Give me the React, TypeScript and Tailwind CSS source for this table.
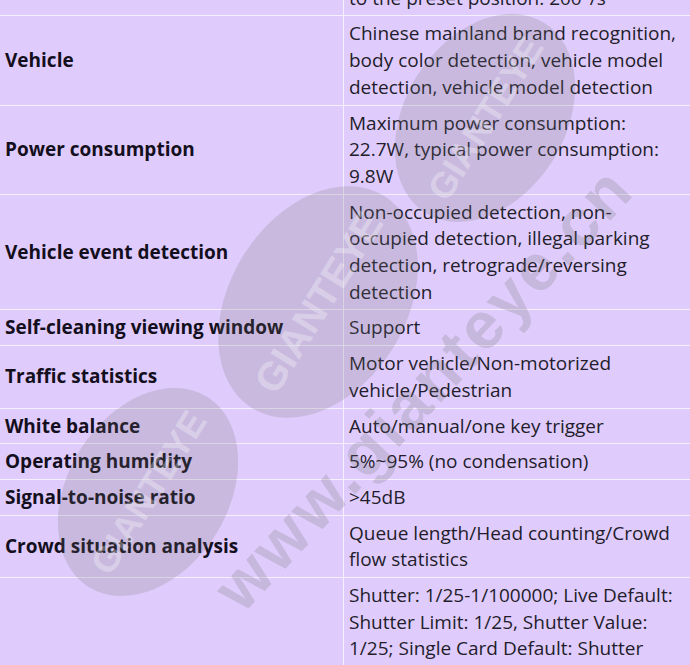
import React from "react";

type Row = { label: string; value: string };

const rows: Row[] = [
  { label: "Vehicle", value: "Chinese mainland brand recognition, body color detection, vehicle model detection, vehicle model detection" },
  { label: "Power consumption", value: "Maximum power consumption: 22.7W, typical power consumption: 9.8W" },
  { label: "Vehicle event detection", value: "Non-occupied detection, non-occupied detection, illegal parking detection, retrograde/reversing detection" },
  { label: "Self-cleaning viewing window", value: "Support" },
  { label: "Traffic statistics", value: "Motor vehicle/Non-motorized vehicle/Pedestrian" },
  { label: "White balance", value: "Auto/manual/one key trigger" },
  { label: "Operating humidity", value: "5%~95% (no condensation)" },
  { label: "Signal-to-noise ratio", value: ">45dB" },
  { label: "Crowd situation analysis", value: "Queue length/Head counting/Crowd flow statistics" },
];

function Blob({ cx, cy, rx, ry, fs }: { cx: number; cy: number; rx: number; ry: number; fs: number }) {
  return (
    <g transform={`rotate(-58 ${cx} ${cy})`}>
      <ellipse cx={cx} cy={cy} rx={rx} ry={ry} fill="#6f6f6f" opacity="0.2" />
      <text
        x={cx}
        y={cy + fs * 0.36}
        textAnchor="middle"
        fontFamily="Liberation Sans, sans-serif"
        fontWeight="bold"
        fontSize={fs}
        fill="#ffffff"
        opacity="0.3"
      >
        GIANTEYE
      </text>
    </g>
  );
}

export default function App() {
  return (
    <div
      className="relative w-[690px] h-[665px] overflow-hidden bg-[#e0ccfc]"
      style={{ fontFamily: '"Open Sans", "Noto Sans", sans-serif' }}
    >
      <div className="-mt-[46px]">
        <div className="grid grid-cols-[344px_346px] border-b border-[#f6efff]">
          <div className="border-r border-[#f6efff]" />
          <div className="px-[5px] py-[4px] text-[19px] leading-[26.7px] text-[#231d2b]">
            <span className="block whitespace-nowrap">Rotation speed: 0.1°~200°/s, speed</span>
            <span className="block whitespace-nowrap">to the preset position: 200°/s</span>
          </div>
        </div>
        {rows.map((r) => (
          <div key={r.label} className="grid grid-cols-[344px_346px] border-b border-[#f6efff]">
            <div className="flex items-center border-r border-[#f6efff] px-[5px] py-[4px] text-[19px] leading-[26.7px] font-bold text-[#140f1c]">
              {r.label}
            </div>
            <div className="px-[5px] py-[4px] text-[19px] leading-[26.7px] text-[#231d2b]">{r.value}</div>
          </div>
        ))}
        <div className="grid grid-cols-[344px_346px] border-b border-[#f6efff]">
          <div className="flex items-center border-r border-[#f6efff] px-[5px] py-[4px] text-[19px] leading-[26.7px] font-bold text-[#140f1c]">
            Shutter
          </div>
          <div className="px-[5px] py-[4px] text-[19px] leading-[26.7px] text-[#231d2b]">
            Shutter: 1/25-1/100000; Live Default: Shutter Limit: 1/25, Shutter Value: 1/25; Single Card Default: Shutter Limit: 1/25, Shutter Value: 1/25; Double Card Default: Shutter Limit: 1/25, Shutter Value: 1/25; Triple Card Default: Shutter Limit: 1/25, Shutter Value: 1/25; Quad Card Default: Shutter Limit: 1/25, Shutter Value: 1/25; Other modes: Shutter Limit: 1/25, Shutter Value: 1/25
          </div>
        </div>
      </div>

      <svg
        className="pointer-events-none absolute left-0 top-0"
        width="690"
        height="665"
        viewBox="0 0 690 665"
      >
        <Blob cx={148} cy={492} rx={112} ry={80} fs={36} />
        <Blob cx={318} cy={302} rx={125} ry={88} fs={40} />
        <Blob cx={485} cy={118} rx={112} ry={80} fs={36} />
        <text
          x="425"
          y="410"
          transform="rotate(-47 425 390)"
          textAnchor="middle"
          fontFamily="Liberation Sans, sans-serif"
          fontWeight="bold"
          fontSize="66"
          fill="#6f6f6f"
          opacity="0.22"
          letterSpacing="3"
        >
          www.gianteye.cn
        </text>
      </svg>
    </div>
  );
}
